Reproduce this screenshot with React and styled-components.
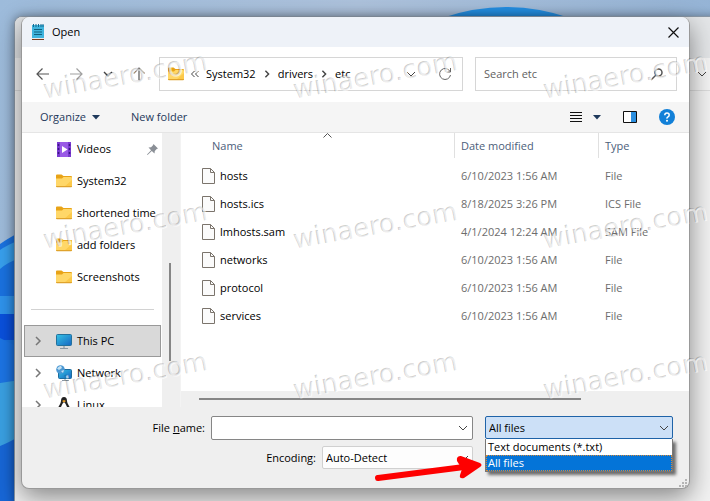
import React from 'react';
import styled, { createGlobalStyle } from 'styled-components';

const GlobalStyle = createGlobalStyle`
  * {
    box-sizing: border-box;
  }

  body {
    margin: 0;
    overflow: hidden;
  }

  body, button, input, select, table {
    font-family: 'Open Sans', 'Noto Sans', sans-serif;
    font-size: 11px;
    line-height: 16px;
    color: #000;
  }
`;

const Desktop = styled.main`
  position: relative;
  display: flex;
  height: 100vh;
  min-height: 440px;
  padding: 17px 20px 12px 21px;
  overflow: hidden;
  background: linear-gradient(100deg, #9dbbdb, #adc2dc 45%, #8fb0d4);
`;

const Wallpaper = styled.svg`
  position: absolute;
  top: 0;
  left: 0;
`;

const BackWindow = styled.div`
  position: absolute;
  top: 16px;
  bottom: -10px;
  left: 14px;
  right: -10px;
  border: 1px solid #8a97a5;
  border-radius: 8px 0 0 0;
  background: #f2f2f2;
  box-shadow: 0 0 10px rgba(0, 0, 0, 0.35);
  overflow: hidden;
`;

const BackTitle = styled.div`
  height: 41px;
  background: #e4e6e8;
`;

const BackToolbar = styled.div`
  display: flex;
  justify-content: flex-end;
  align-items: center;
  height: 33px;
  padding-right: 12px;
  border-bottom: 1px solid #dcdcdc;
  background: #f4f4f4;
`;

const Dialog = styled.section`
  position: relative;
  flex: 1;
  min-width: 0;
  display: flex;
  flex-direction: column;
  border: 1px solid #999;
  border-top: none;
  border-radius: 8px;
  background: #efefef;
  box-shadow: 0 8px 26px rgba(0, 0, 0, 0.45);
`;

const TitleBar = styled.header`
  display: flex;
  align-items: center;
  gap: 7px;
  height: 30px;
  padding: 0 9px 0 9px;
  border-radius: 8px 8px 0 0;
  background: #eef2f8;
`;

const Title = styled.h1`
  flex: 1;
  margin: 0;
  font-size: 11px;
  font-weight: 400;
`;

const IconButton = styled.button`
  display: flex;
  align-items: center;
  justify-content: center;
  width: ${props => props.$width || 14}px;
  height: 14px;
  padding: 0;
  border: none;
  background: transparent;
`;

const NavBar = styled.nav`
  display: flex;
  align-items: center;
  height: 55px;
  padding: 0 12px 1px 13px;
  background: #fff;
`;

const NavButtons = styled.div`
  display: flex;
  gap: 17px;
  margin-right: 13px;
`;

const AddressBar = styled.div`
  flex: 1;
  display: flex;
  align-items: center;
  height: 34px;
  margin-right: 12px;
  padding: 0 10px 0 8px;
  border: 1px solid #d6d6d6;
`;

const Crumbs = styled.div`
  flex: 1;
  display: flex;
  align-items: center;
  gap: 7px;
`;

const Crumb = styled.button`
  padding: 0;
  border: none;
  background: transparent;
`;

const AddressTools = styled.div`
  display: flex;
  gap: 20px;
`;

const SearchBox = styled.label`
  display: flex;
  align-items: center;
  width: 202px;
  height: 34px;
  padding: 0 12px 0 8px;
  border: 1px solid #d6d6d6;
`;

const SearchInput = styled.input`
  flex: 1;
  min-width: 0;
  padding: 0;
  border: none;
  outline: none;

  &::placeholder {
    color: #5f5f5f;
    opacity: 1;
  }
`;

const Toolbar = styled.div`
  display: flex;
  align-items: center;
  height: 31px;
  padding: 0 14px 0 18px;
  border-bottom: 1px solid #e5e5e5;
  background: #f5f5f5;
`;

const ToolButton = styled.button`
  display: flex;
  align-items: center;
  gap: 6px;
  margin-right: 31px;
  padding: 0;
  border: none;
  background: transparent;
  color: #1e395b;
`;

const ToolGroup = styled.div`
  display: flex;
  align-items: center;
  gap: 20px;
  margin-left: auto;
`;

const ViewButton = styled.button`
  display: flex;
  align-items: center;
  gap: 11px;
  padding: 0;
  border: none;
  background: transparent;
`;

const Body = styled.div`
  flex: 1;
  display: flex;
  min-height: 0;
  overflow: hidden;
`;

const Sidebar = styled.aside`
  flex: none;
  width: 140px;
  padding: 0 1px 0 2px;
  overflow: hidden;
  background: #fff;
`;

const Places = styled.ul`
  margin: 0;
  padding: 0;
  list-style: none;
`;

const Place = styled.li`
  display: grid;
  grid-template-columns: ${props => (props.$tree ? 20 : 15)}px 16px 84px;
  column-gap: 5px;
  align-items: center;
  height: 32px;
  padding-left: ${props => (props.$tree ? 6 : 11)}px;
  border: 1px solid ${props => (props.$selected ? '#999' : 'transparent')};
  background: ${props => (props.$selected ? '#d9d9d9' : 'transparent')};
  white-space: nowrap;
`;

const PlaceName = styled.span`
  display: flex;
  justify-content: space-between;
  align-items: center;
  padding-right: 3px;
`;

const Divider = styled.hr`
  height: 1px;
  margin: 16px 7px 15px;
  border: none;
  background: #d2d2d2;
`;

const SideScroll = styled.div`
  flex: none;
  display: flex;
  justify-content: center;
  width: 16px;
  margin-right: 2px;
  padding-top: 130px;
  background: #efefef;
`;

const SideThumb = styled.div`
  width: 2px;
  height: 98px;
  background: #868686;
`;

const FilePane = styled.div`
  flex: 1;
  min-width: 0;
  display: flex;
  flex-direction: column;
  border-left: 1px solid #f3f3f3;
  background: #fff;
`;

const FileScroll = styled.div`
  flex: 1;
  min-height: 0;
  padding-left: 21px;
  overflow: hidden;
`;

const FileTable = styled.table`
  width: 100%;
  border-collapse: collapse;
  table-layout: fixed;
`;

const HeadCell = styled.th`
  position: relative;
  width: ${props => props.$width || 'auto'};
  height: 29px;
  padding: 0 0 4px;
  font-weight: 400;
  text-align: left;
`;

const HeadLabel = styled.div`
  height: 25px;
  padding: 5px 0 0 ${props => props.$indent}px;
  border-right: 1px solid ${props => (props.$last ? 'transparent' : '#e0e0e0')};
  color: #4c607a;
`;

const SortMark = styled.svg`
  position: absolute;
  top: 0;
  left: 48%;
`;

const Cell = styled.td`
  height: 28px;
  padding: 0 0 0 6px;
  color: #6d6d6d;
  white-space: nowrap;
`;

const NameCell = styled(Cell)`
  padding-left: 0;
  color: #000;
`;

const FileLabel = styled.span`
  display: flex;
  align-items: center;
  gap: 5px;
`;

const BottomScroll = styled.div`
  display: flex;
  align-items: center;
  height: 16px;
  padding-left: 18px;
  background: #efefef;
`;

const BottomThumb = styled.div`
  width: 78%;
  height: 2px;
  background: #868686;
`;

const Footer = styled.footer`
  position: relative;
  display: flex;
  gap: 12px;
  height: 81px;
  padding: 9px 16px 0 19px;
`;

const Fields = styled.div`
  flex: 1;
  display: flex;
  flex-direction: column;
  gap: 6px;
`;

const Field = styled.div`
  display: flex;
  align-items: center;
  gap: 6px;
`;

const FieldLabel = styled.label`
  flex: none;
  width: ${props => props.$width}px;
  text-align: right;
`;

const Combo = styled.div`
  flex: 1;
  display: flex;
  align-items: center;
  height: 24px;
  padding-right: 4px;
  border: 1px solid #868686;
  border-radius: 2px;
  background: #fff;
`;

const ComboInput = styled.input`
  flex: 1;
  min-width: 0;
  border: none;
  outline: none;
  background: transparent;
`;

const SelectWrap = styled.div`
  position: relative;
  display: flex;
  flex: 1;
`;

const SelectMark = styled.span`
  position: absolute;
  top: 7px;
  right: 4px;
  display: flex;
  pointer-events: none;
`;

const Select = styled.select`
  appearance: none;
  width: 100%;
  height: 23px;
  padding: 0 20px 0 3px;
  border: 1px solid ${props => (props.$open ? '#1f63a8' : '#d0d0d0')};
  border-radius: 2px;
  outline: none;
  background: ${props => (props.$open ? '#cce0f7' : '#fdfdfd')};
`;

const TypeColumn = styled.div`
  width: 188px;
`;

const Options = styled.ul`
  position: absolute;
  top: 23px;
  left: 0;
  right: 0;
  margin: 0;
  padding: 0;
  border: 1px solid #777;
  border-top: none;
  background: #fff;
  box-shadow: 3px 3px 3px rgba(0, 0, 0, 0.55);
  list-style: none;
`;

const Option = styled.li`
  height: 16px;
  padding-left: ${props => (props.$active ? 1 : 2)}px;
  border: ${props => (props.$active ? '1px dotted #d58a3a' : 'none')};
  background: ${props => (props.$active ? '#0474d8' : '#fff')};
  color: ${props => (props.$active ? '#fff' : '#000')};
  line-height: ${props => (props.$active ? 14 : 16)}px;
`;

const Grip = styled.svg`
  position: absolute;
  right: 2px;
  bottom: 1px;
`;

const Watermarks = styled.div`
  position: absolute;
  top: 0;
  left: 43px;
  display: grid;
  grid-template-columns: repeat(3, 250px);
  grid-auto-rows: 150px;
  pointer-events: none;
`;

const Watermark = styled.span`
  justify-self: start;
  align-self: start;
  margin-top: 60px;
  font-family: 'DejaVu Sans', sans-serif;
  font-size: 26px;
  line-height: 32px;
  color: rgba(255, 255, 255, 0.65);
  text-shadow: -1px -1px 0 rgba(0, 0, 0, 0.2);
  transform: rotate(-10deg);
`;

const RedArrow = styled.svg`
  position: absolute;
  left: 370px;
  top: 452px;
  pointer-events: none;
`;

const Chevron = ({ size = 10, color = '#444', turn = 0, width = 1 }) => (
  <svg width={size} height={size} viewBox="0 0 10 10" fill="none" stroke={color} strokeWidth={width}>
    <path d="M1 3l4 4 4-4" transform={`rotate(${turn} 5 5)`} />
  </svg>
);

const Arrow = ({ color = '#555', turn = 0 }) => (
  <svg width="14" height="14" viewBox="0 0 14 14" fill="none" stroke={color} strokeWidth="1.2">
    <path d="M13 7H1.5M6.5 1.5L1 7l5.5 5.5" transform={`rotate(${turn} 7 7)`} />
  </svg>
);

const CaretDown = () => (
  <svg width="8" height="5" viewBox="0 0 8 5">
    <path d="M0 0h8L4 4.5z" fill="#1e395b" />
  </svg>
);

const FolderIcon = () => (
  <svg width="16" height="16" viewBox="0 0 16 16">
    <path d="M0 2.5Q0 1.5 1 1.5h4.5L7.5 3H15q1 0 1 1v4H0z" fill="#e8a317" />
    <path d="M0 5.5h6L7.5 4H15q1 0 1 1v8q0 1-1 1H1q-1 0-1-1z" fill="#ffd768" />
    <path d="M8 14l8-7v6q0 1-1 1z" fill="#fcc94a" />
    <path d="M0 13h16q0 1.2-1 1.2H1Q0 14.2 0 13z" fill="#e0a32c" />
  </svg>
);

const NotepadIcon = () => (
  <svg width="14" height="18" viewBox="0 0 14 18">
    <path d="M1 2h12v14H1z" fill="#3fb4dd" />
    <path d="M1 15h12v2H1z" fill="#7b3c1d" />
    <path d="M1 15h12v1H1z" fill="#e8e8e8" />
    <path d="M2.5 1v3M5 1v3M7.5 1v3M10 1v3M12 1v3" stroke="#146a90" />
    <path d="M3 6.5h8M3 9h8M3 11.5h8" stroke="#11607f" strokeWidth="1.2" />
  </svg>
);

const VideosIcon = () => (
  <svg width="16" height="16" viewBox="0 0 16 16">
    <rect x="1" y="1" width="14" height="15" rx="1" fill="#9a5be6" />
    <path d="M1 1h3v15H1zM12 1h3v15h-3z" fill="#7a3bd0" />
    <path d="M2.5 3v12M13.5 3v12" stroke="#3d1486" strokeWidth="1.5" strokeDasharray="2 2" />
    <path d="M6 5l5.5 3.5L6 12z" fill="#fff" />
  </svg>
);

const PinIcon = () => (
  <svg width="11" height="11" viewBox="0 0 11 11">
    <path d="M6.5 0L11 4.5 9.700 5 7.800 6.900 7.500 9.500 4.800 6.900.5 11l-.5-.5 4.100-4.300L1.500 3.500 4.100 3.200 6 1.300z" fill="#8a8f96" />
  </svg>
);

const PcIcon = () => (
  <svg width="16" height="16" viewBox="0 0 16 16">
    <defs>
      <linearGradient id="screen" x1="0" y1="0" x2="1" y2="1">
        <stop offset="0" stopColor="#35c3e4" />
        <stop offset="1" stopColor="#1766c2" />
      </linearGradient>
    </defs>
    <rect x="0.5" y="1.5" width="15" height="11" rx="1" fill="url(#screen)" stroke="#23719c" />
    <path d="M8 13v2M4 15.5h8" stroke="#8b97a2" strokeWidth="1.2" />
  </svg>
);

const NetworkIcon = () => (
  <svg width="16" height="16" viewBox="0 0 16 16">
    <rect x="2.5" y="4.5" width="13" height="9" rx="1" fill="url(#screen)" stroke="#1d6b9c" />
    <path d="M9 14v1M6 15.5h7" stroke="#8b97a2" />
    <circle cx="4.5" cy="4.5" r="4.3" fill="#4b98d3" />
    <path d="M1 3.5q2-3 4-2.5l1 2-3 2zM5 6l3-1-1 3z" fill="#c5e2f3" />
  </svg>
);

const LinuxIcon = () => (
  <svg width="16" height="16" viewBox="0 0 16 16">
    <path d="M8 0q3 0 3 4 0 2 2 5t1 6H2q-1-3 1-6t2-5q0-4 3-4z" fill="#222" />
    <path d="M8 5q1.5 1 3 5t0 5H5q-1.5-1 0-5t3-5z" fill="#fff" />
    <path d="M6 4l2-1 2 1-2 1.5z" fill="#eda12b" />
    <path d="M0 15l3-4 3 4zM10 15l3-4 3 4z" fill="#eda12b" />
  </svg>
);

const FileIcon = () => (
  <svg width="13" height="16" viewBox="0 0 13 16">
    <path d="M.5.5h8l4 4v11H.5z" fill="#fbfbfb" stroke="#7b746c" />
    <path d="M8.5.5v4h4" fill="none" stroke="#7b746c" />
  </svg>
);

const quickPlaces = ['System32', 'shortened time', 'add folders', 'Screenshots'];

const files = [
  { name: 'hosts', date: '6/10/2023 1:56 AM', type: 'File' },
  { name: 'hosts.ics', date: '8/18/2025 3:26 PM', type: 'ICS File' },
  { name: 'lmhosts.sam', date: '4/1/2024 12:24 AM', type: 'SAM File' },
  { name: 'networks', date: '6/10/2023 1:56 AM', type: 'File' },
  { name: 'protocol', date: '6/10/2023 1:56 AM', type: 'File' },
  { name: 'services', date: '6/10/2023 1:56 AM', type: 'File' },
];

const TreePlace = ({ icon, name, selected }) => (
  <Place $tree $selected={selected}>
    <IconButton aria-label={`Expand ${name}`}>
      <Chevron color="#777" turn={-90} width={1.5} />
    </IconButton>
    {icon}
    <PlaceName>{name}</PlaceName>
  </Place>
);

const Navigation = () => (
  <NavBar>
    <NavButtons>
      <IconButton $width={16} aria-label="Back"><Arrow /></IconButton>
      <IconButton $width={16} aria-label="Forward"><Arrow color="#a0a0a0" turn={180} /></IconButton>
      <IconButton aria-label="Recent locations"><Chevron width={1.4} /></IconButton>
      <IconButton aria-label="Up"><Arrow turn={90} /></IconButton>
    </NavButtons>
    <AddressBar>
      <Crumbs>
        <FolderIcon />
        <svg width="8" height="8" viewBox="0 0 8 8" fill="none" stroke="#444">
          <path d="M3.5 1l-3 3 3 3M7.5 1l-3 3 3 3" />
        </svg>
        <Crumb>System32</Crumb>
        <Chevron size={8} turn={-90} width={1.8} />
        <Crumb>drivers</Crumb>
        <Chevron size={8} turn={-90} width={1.8} />
        <Crumb>etc</Crumb>
      </Crumbs>
      <AddressTools>
        <IconButton aria-label="Previous locations"><Chevron /></IconButton>
        <IconButton aria-label="Refresh">
          <svg width="14" height="14" viewBox="0 0 14 14" fill="none" stroke="#666">
            <path d="M12 4.5A5.5 5.5 0 1 0 12.5 8M12.5 1v4h-4" />
          </svg>
        </IconButton>
      </AddressTools>
    </AddressBar>
    <SearchBox>
      <SearchInput type="search" placeholder="Search etc" aria-label="Search etc" />
      <svg width="14" height="14" viewBox="0 0 14 14" fill="none" stroke="#555">
        <circle cx="8.5" cy="5.5" r="3.5" strokeWidth="1.5" />
        <path d="M6 8l-5 5" strokeWidth="1.5" />
      </svg>
    </SearchBox>
  </NavBar>
);

const Commands = () => (
  <Toolbar>
    <ToolButton>Organize <CaretDown /></ToolButton>
    <ToolButton>New folder</ToolButton>
    <ToolGroup>
      <ViewButton aria-label="Change your view">
        <svg width="12" height="12" viewBox="0 0 12 12" stroke="#111">
          <path d="M0 1.5h12M0 4.5h12M0 7.5h12M0 10.5h12" />
        </svg>
        <CaretDown />
      </ViewButton>
      <IconButton $width={18} aria-label="Show the preview pane">
        <svg width="14" height="12" viewBox="0 0 14 12">
          <path d="M.5.5h13v11H.5z" fill="#fff" stroke="#111" />
          <path d="M8 1h5v10H8z" fill="#2b8fe0" />
        </svg>
      </IconButton>
      <IconButton $width={16} aria-label="Get help">
        <svg width="16" height="16" viewBox="0 0 16 16">
          <circle cx="8" cy="8" r="8" fill="#1280d8" />
          <path d="M5.8 6.2q0-2.2 2.2-2.2t2.2 2q0 1.2-1.2 1.9T8 9.6" fill="none" stroke="#fff" strokeWidth="1.5" />
          <circle cx="8" cy="11.8" r="1" fill="#fff" />
        </svg>
      </IconButton>
    </ToolGroup>
  </Toolbar>
);

const PlacesPane = () => (
  <Sidebar>
    <Places>
      <Place>
        <span />
        <VideosIcon />
        <PlaceName>Videos <PinIcon /></PlaceName>
      </Place>
      {quickPlaces.map(name => (
        <Place key={name}>
          <span />
          <FolderIcon />
          <PlaceName>{name}</PlaceName>
        </Place>
      ))}
    </Places>
    <Divider />
    <Places>
      <TreePlace icon={<PcIcon />} name="This PC" selected />
      <TreePlace icon={<NetworkIcon />} name="Network" />
      <TreePlace icon={<LinuxIcon />} name="Linux" />
    </Places>
  </Sidebar>
);

const FileList = () => (
  <FilePane>
    <FileScroll>
      <FileTable>
        <thead>
          <tr>
            <HeadCell>
              <SortMark width="9" height="5" viewBox="0 0 9 5" fill="none" stroke="#555">
                <path d="M.5 4.5l4-4 4 4" />
              </SortMark>
              <HeadLabel $indent={10}>Name</HeadLabel>
            </HeadCell>
            <HeadCell $width="144px"><HeadLabel $indent={6}>Date modified</HeadLabel></HeadCell>
            <HeadCell $width="90px"><HeadLabel $indent={6} $last>Type</HeadLabel></HeadCell>
          </tr>
        </thead>
        <tbody>
          {files.map(file => (
            <tr key={file.name}>
              <NameCell>
                <FileLabel><FileIcon /> {file.name}</FileLabel>
              </NameCell>
              <Cell>{file.date}</Cell>
              <Cell>{file.type}</Cell>
            </tr>
          ))}
        </tbody>
      </FileTable>
    </FileScroll>
    <BottomScroll>
      <BottomThumb />
    </BottomScroll>
  </FilePane>
);

const DialogFooter = () => (
  <Footer>
    <Fields>
      <Field>
        <FieldLabel $width={164} htmlFor="file-name">File <u>n</u>ame:</FieldLabel>
        <Combo>
          <ComboInput id="file-name" type="text" />
          <Chevron />
        </Combo>
      </Field>
      <Field>
        <FieldLabel $width={275} htmlFor="encoding">Encoding:</FieldLabel>
        <SelectWrap>
          <Select id="encoding" defaultValue="auto">
            <option value="auto">Auto-Detect</option>
          </Select>
          <SelectMark><Chevron /></SelectMark>
        </SelectWrap>
      </Field>
    </Fields>
    <TypeColumn>
      <SelectWrap>
        <Select $open aria-label="File type" defaultValue="all">
          <option value="txt">Text documents (*.txt)</option>
          <option value="all">All files</option>
        </Select>
        <SelectMark><Chevron /></SelectMark>
        <Options role="listbox" aria-label="File type">
          <Option role="option" aria-selected="false">Text documents (*.txt)</Option>
          <Option role="option" aria-selected="true" $active>All files</Option>
        </Options>
      </SelectWrap>
    </TypeColumn>
    <Grip width="8" height="8" viewBox="0 0 8 8" fill="#b5b5b5">
      <path d="M6 0h2v2H6zM3 3h2v2H3zM6 3h2v2H6zM0 6h2v2H0zM3 6h2v2H3zM6 6h2v2H6z" />
    </Grip>
  </Footer>
);

const App = () => (
  <>
    <GlobalStyle />
    <Desktop>
      <Wallpaper width="710" height="501" viewBox="0 0 710 501">
        <path d="M0 244q7-5 20-12v269H0z" fill="#1a72e0" />
        <path d="M0 250q7-5 20-10v18q-12 4-20 11z" fill="#38a0ee" />
        <path d="M0 296h20v18H0z" fill="#2f93ec" />
        <path d="M0 314h20v26H0z" fill="#0a50dc" />
        <path d="M0 338q8 4 20 10v34H0z" fill="#1c74e4" />
        <path d="M0 383l20-3v120H0z" fill="#3aa0e2" />
        <path d="M0 446q8-3 20-10v65H0z" fill="#1766d6" />
        <path d="M442 18q64-22 128 0z" fill="#2490e4" />
      </Wallpaper>
      <BackWindow>
        <BackTitle />
        <BackToolbar><Chevron /></BackToolbar>
      </BackWindow>
      <Dialog aria-label="Open">
        <TitleBar>
          <NotepadIcon />
          <Title>Open</Title>
          <IconButton aria-label="Close">
            <svg width="11" height="11" viewBox="0 0 11 11" stroke="#111" strokeWidth="1.2">
              <path d="M.5.5l10 10M10.5.5l-10 10" />
            </svg>
          </IconButton>
        </TitleBar>
        <Navigation />
        <Commands />
        <Body>
          <PlacesPane />
          <SideScroll><SideThumb /></SideScroll>
          <FileList />
        </Body>
        <DialogFooter />
      </Dialog>
      <Watermarks aria-hidden="true">
        {Array.from({ length: 9 }, (_, i) => (
          <Watermark key={i}>winaero.com</Watermark>
        ))}
      </Watermarks>
      <RedArrow width="114" height="30" viewBox="0 0 114 30">
        <path d="M8 26L94 15" stroke="#fe0000" strokeWidth="6" strokeLinecap="round" />
        <path d="M91 4l19 7q3 2 0 4L94 26q-5 1-4-3l2-6-5-8q-1-5 4-5z" fill="#fe0000" />
      </RedArrow>
    </Desktop>
  </>
);

export default App;
